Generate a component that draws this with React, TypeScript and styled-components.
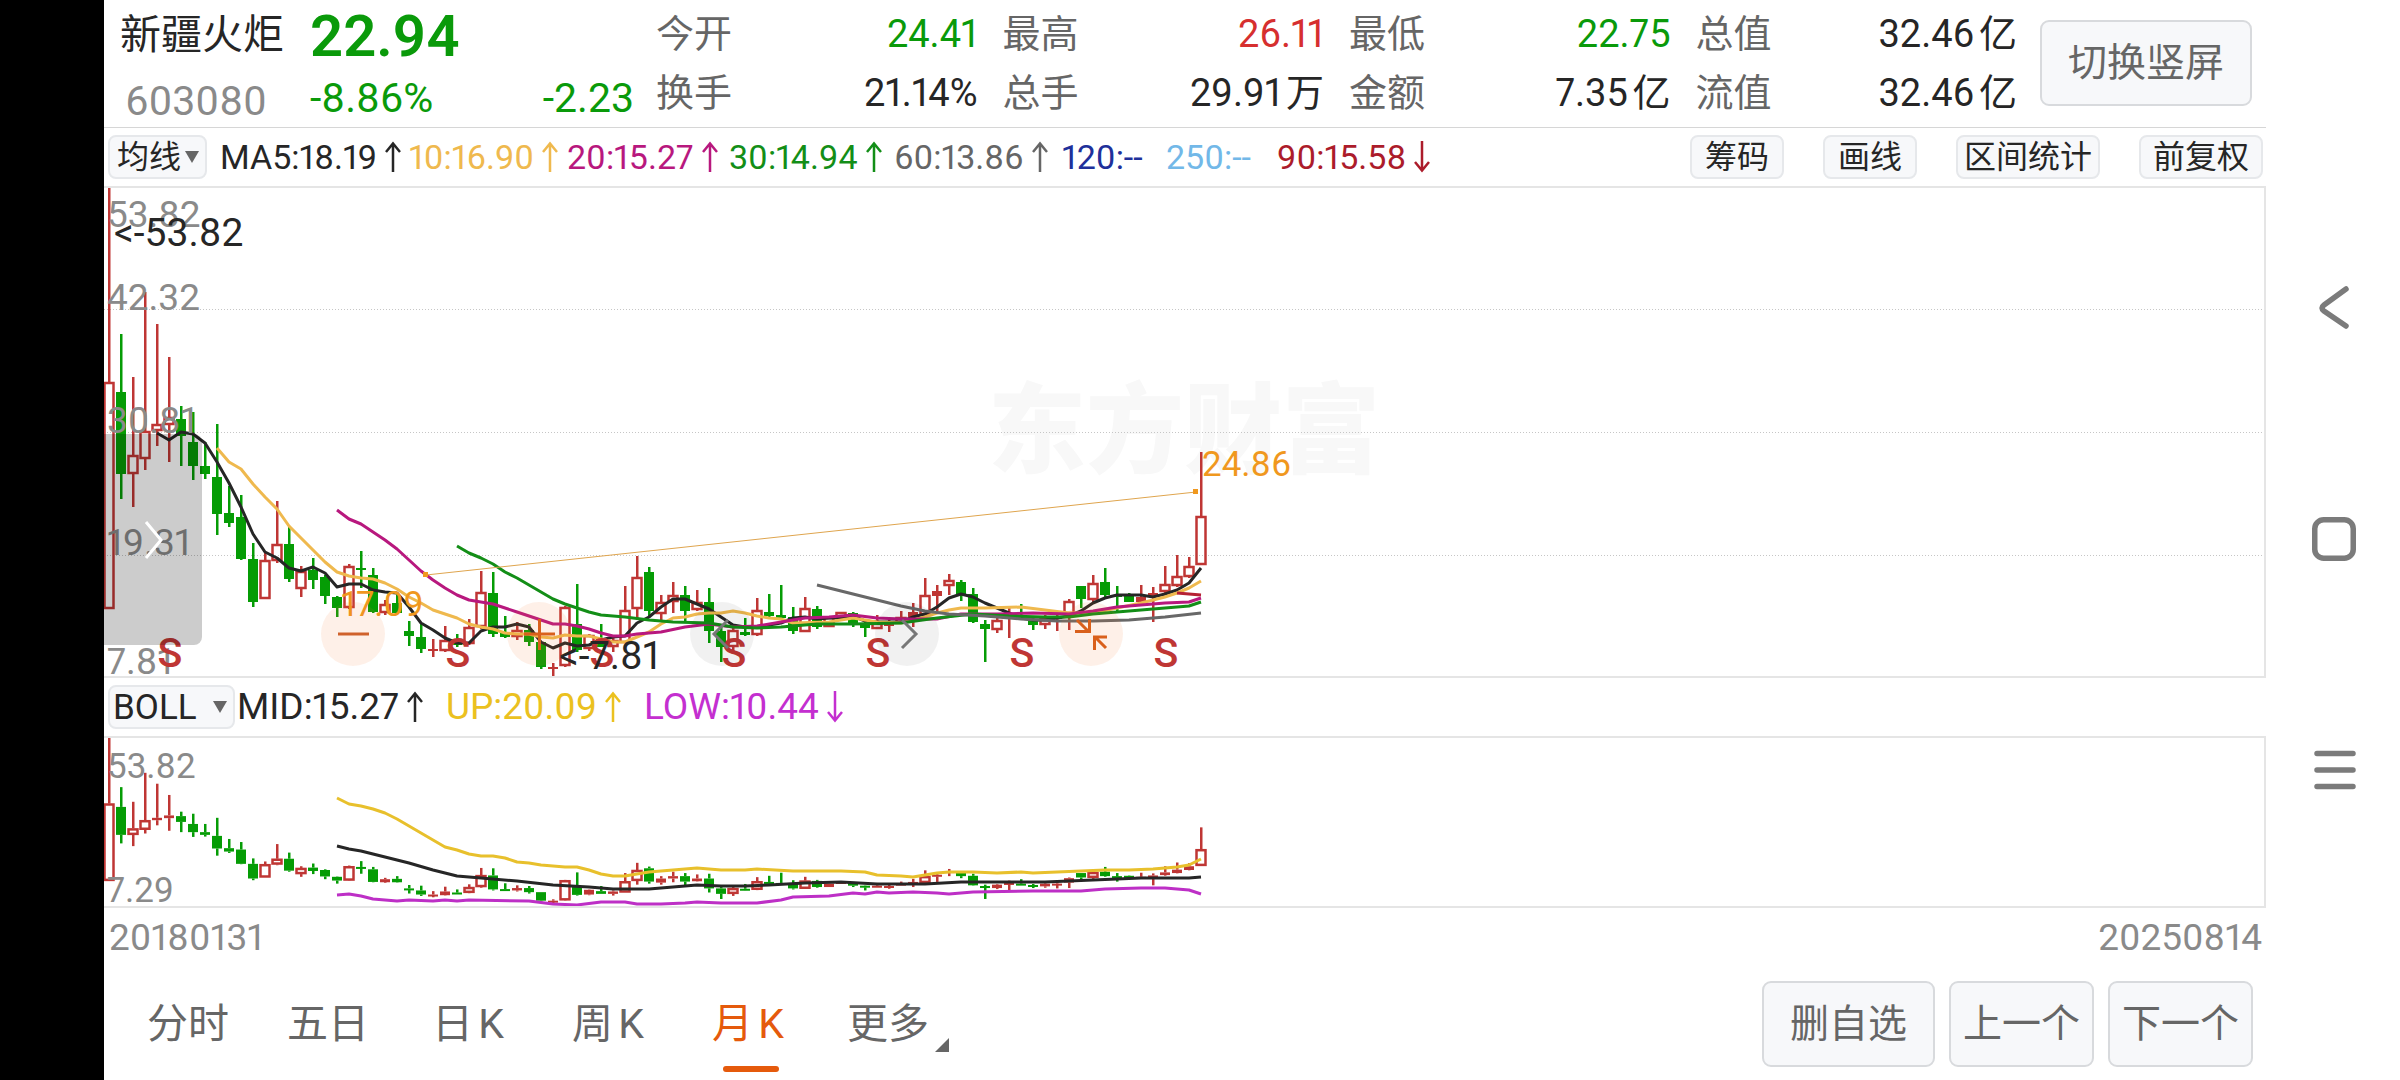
import React from "react";
import styled, { createGlobalStyle } from "styled-components";

const GlobalStyle = createGlobalStyle`
  *, *::before, *::after { box-sizing: border-box; }
  body { margin: 0; background: #fff; }
  button, select { font-family: inherit; }
`;

const GREEN = "#0a9a0a";
const RED = "#bf3634";
const INK = "#262626";
const MUTED = "#666";
const ORANGE = "#f0981e";

/* ---------- data ---------- */

// [high, body top, body bottom, low, rising]; distance in px below the top price of the main pane
type Candle = [number, number, number, number, 0 | 1];

const candles: Candle[] = [
  [0, 195, 422, 422, 1], [147, 205, 287, 312, 0], [190, 268, 287, 320, 1], [105, 244, 272, 283, 1],
  [137, 237, 244, 259, 1], [170, 230, 238, 275, 1], [219, 232, 249, 279, 0], [225, 255, 279, 293, 0],
  [255, 279, 287, 292, 0], [237, 290, 327, 348, 0], [299, 326, 336, 340, 0], [308, 330, 372, 373, 0],
  [356, 372, 415, 420, 0], [365, 373, 412, 412, 1], [314, 357, 374, 376, 1], [339, 357, 392, 395, 0],
  [379, 384, 402, 410, 1], [371, 383, 393, 402, 0], [388, 390, 409, 417, 0], [409, 410, 421, 430, 0],
  [377, 379, 421, 422, 1], [364, 381, 383, 401, 0], [381, 388, 425, 426, 0], [413, 417, 426, 428, 1],
  [408, 416, 426, 427, 0], [434, 444, 449, 459, 0], [436, 450, 462, 466, 0], [452, 462, 464, 470, 1],
  [439, 453, 464, 465, 1], [447, 456, 457, 460, 0], [432, 440, 457, 458, 1], [384, 405, 440, 442, 1],
  [385, 406, 447, 450, 0], [429, 446, 450, 451, 0], [435, 443, 450, 453, 1], [437, 443, 455, 459, 0],
  [455, 455, 480, 482, 0], [476, 480, 481, 490, 1], [419, 420, 479, 480, 1], [397, 437, 463, 465, 0],
  [447, 448, 462, 464, 1], [437, 452, 460, 460, 0], [450, 453, 460, 465, 1], [399, 423, 456, 456, 1],
  [369, 390, 422, 433, 1], [380, 385, 424, 430, 0], [408, 415, 427, 433, 1], [395, 408, 415, 426, 1],
  [399, 408, 424, 434, 0], [403, 415, 423, 424, 1], [401, 415, 444, 456, 0], [440, 444, 460, 475, 0],
  [440, 443, 460, 466, 1], [431, 445, 448, 449, 0], [411, 423, 448, 449, 1], [407, 425, 429, 430, 0],
  [398, 428, 431, 432, 0], [420, 430, 444, 447, 0], [410, 421, 445, 445, 1], [419, 422, 440, 442, 0],
  [430, 430, 440, 440, 1], [425, 425, 431, 431, 1], [425, 426, 436, 440, 0], [435, 436, 441, 450, 0],
  [428, 436, 442, 442, 1], [431, 437, 438, 445, 1], [424, 430, 436, 436, 1], [416, 425, 430, 440, 1],
  [391, 408, 428, 428, 1], [398, 404, 409, 425, 1], [387, 393, 399, 408, 1], [393, 395, 408, 414, 0],
  [401, 407, 435, 436, 0], [433, 437, 442, 475, 0], [431, 433, 443, 446, 1], [421, 428, 430, 451, 1],
  [417, 430, 431, 432, 0], [431, 434, 438, 443, 0], [428, 430, 438, 442, 1], [426, 430, 431, 444, 1],
  [412, 414, 427, 443, 1], [399, 399, 412, 421, 0], [388, 396, 413, 416, 1], [381, 395, 408, 410, 0],
  [399, 408, 409, 424, 0], [406, 407, 415, 415, 0], [398, 410, 415, 415, 1], [400, 406, 410, 435, 1],
  [379, 397, 405, 407, 1], [368, 389, 399, 400, 1], [370, 379, 390, 391, 1], [265, 329, 378, 378, 1],
];

// [candle index, y]
type Point = [number, number];
interface Series { color: string; points: Point[]; }

const from = (start: number, ys: number[]): Point[] => ys.map((y, k) => [start + k, y]);

const mainSeries: Series[] = [
  {
    color: INK,
    points: from(4, [
      246, 253, 245, 247, 256, 275, 296, 320, 347, 365, 371, 381, 384, 380, 386, 400, 397, 397, 403, 405, 406,
      420, 436, 443, 451, 456, 456, 444, 440, 440, 437, 440, 455, 461, 456, 459, 458, 453, 450, 449, 436, 430,
      420, 412, 412, 417, 422, 430, 438, 440, 440, 438, 436, 431, 430, 432, 431, 431, 429, 434, 435, 435, 435,
      430, 427, 420, 411, 407, 410, 416, 421, 426, 431, 433, 433, 431, 429, 424, 416, 411, 408, 408, 408, 410,
      407, 403, 396, 381,
    ]),
  },
  {
    color: "#efb94e",
    points: [
      ...from(9, [
        261, 275, 282, 297, 310, 322, 339, 351, 363, 375, 385, 389, 391, 392, 396, 402, 410, 416, 423, 427, 431,
        437, 440, 442, 446, 447, 447, 450, 451, 448, 449, 449, 452, 455, 455, 450, 445, 437, 431, 430, 427, 426,
        426, 424, 426, 429, 431, 432, 436,
      ]),
      [60, 435], [62, 431], [64, 435], [66, 436], [67, 433], [68, 430], [69, 426], [70, 423], [71, 421], [73, 421],
      [76, 420], [78, 423], [80, 426], [82, 426], [84, 421], [86, 416], [88, 410], [89, 406], [90, 401], [91, 394],
    ],
  },
  {
    color: "#b8187e",
    points: [
      ...from(19, [
        323, 332, 337, 345, 353, 362, 373, 384, 393, 401, 408, 413, 415, 417, 421, 425, 429, 433, 437, 437, 439,
        442, 446, 449, 449, 447,
      ]),
      [46, 445], [48, 440], [50, 437], [52, 440], [54, 439], [56, 435], [58, 431], [60, 430], [62, 428], [64, 431],
      [66, 432], [69, 432], [71, 427], [74, 427], [77, 426], [80, 427], [82, 424], [84, 420], [86, 418], [88, 416],
      [90, 415], [91, 411],
    ],
  },
  {
    color: "#138e17",
    points: [
      ...from(29, [359, 366, 371, 377, 385, 391, 398, 405, 412, 417, 421, 425, 428]),
      [43, 430], [45, 433], [47, 435], [50, 436], [52, 440], [54, 441], [56, 440], [59, 437], [62, 437], [66, 436],
      [69, 431], [72, 427], [75, 429], [78, 430], [80, 430], [82, 427], [84, 425], [86, 423], [88, 421], [90, 419],
      [91, 415],
    ],
  },
  {
    color: "#686868",
    points: [
      [59, 398], [60, 401], [62, 407], [64, 413], [66, 419], [68, 424], [70, 427], [73, 429], [76, 432], [79, 434],
      [82, 434], [85, 433], [88, 430], [91, 426],
    ],
  },
  { color: "#b52133", points: [[89, 406], [90, 407], [91, 408]] },
];

const bollSeries: Series[] = [
  {
    color: "#e8c02c",
    points: [
      ...from(19, [61, 67, 69, 72, 76, 82, 89, 96, 103, 110, 113, 117, 119, 119, 121, 125, 126, 128]),
      [38, 130], [39, 130], [40, 133], [41, 137], [42, 139], [43, 139], [44, 137], [45, 135], [47, 133], [49, 131],
      [51, 133], [53, 133], [54, 132], [57, 134], [61, 134], [63, 135], [64, 138], [66, 139], [67, 140], [69, 136],
      [70, 135], [72, 135], [74, 136], [76, 135], [77, 136], [79, 135], [81, 134], [83, 133], [85, 133], [87, 132],
      [89, 130], [90, 128], [91, 122],
    ],
  },
  {
    color: INK,
    points: [
      [19, 109], [20, 112], [21, 114], [23, 120], [25, 126], [27, 133], [29, 139], [31, 141], [34, 144], [37, 148],
      [40, 150], [42, 152], [45, 152], [47, 150], [49, 148], [51, 149], [53, 149], [55, 148], [58, 146], [61, 145],
      [64, 147], [68, 147], [71, 145], [78, 145], [82, 143], [86, 141], [90, 141], [91, 140],
    ],
  },
  {
    color: "#bd2fc6",
    points: [
      [19, 158], [20, 157], [21, 159], [22, 162], [24, 164], [25, 163], [27, 164], [28, 163], [29, 164], [30, 163],
      [35, 164], [37, 167], [39, 168], [41, 165], [43, 165], [44, 167], [46, 167], [48, 166], [49, 165], [51, 166],
      [54, 166], [56, 163], [57, 160], [60, 159], [62, 156], [63, 157], [64, 155], [65, 156], [67, 155], [69, 156],
      [70, 157], [72, 155], [77, 154], [81, 154], [83, 152], [86, 151], [88, 151], [90, 153], [91, 157],
    ],
  },
];

const stats = [
  { label: "今开", value: "24.41", color: GREEN },
  { label: "最高", value: "26.11", color: "#d62f2f" },
  { label: "最低", value: "22.75", color: GREEN },
  { label: "总值", value: "32.46亿", color: INK },
  { label: "换手", value: "21.14%", color: INK },
  { label: "总手", value: "29.91万", color: INK },
  { label: "金额", value: "7.35亿", color: INK },
  { label: "流值", value: "32.46亿", color: INK },
];

const averages = [
  { text: "MA5:18.19", arrow: "up", color: INK, width: 189 },
  { text: "10:16.90", arrow: "up", color: "#efb94e", width: 158 },
  { text: "20:15.27", arrow: "up", color: "#b8187e", width: 162 },
  { text: "30:14.94", arrow: "up", color: "#138e17", width: 165 },
  { text: "60:13.86", arrow: "up", color: MUTED, width: 168 },
  { text: "120:--", arrow: "", color: "#20309a", width: 104 },
  { text: "250:--", arrow: "", color: "#72b8e8", width: 111 },
  { text: "90:15.58", arrow: "down", color: "#ac1c2b", width: 160 },
];

const bands = [
  { text: "MID:15.27", arrow: "up", color: INK, width: 209 },
  { text: "UP:20.09", arrow: "up", color: "#ebc11f", width: 198 },
  { text: "LOW:10.44", arrow: "down", color: "#c42fd0", width: 210 },
];

/* ---------- layout ---------- */

const Screen = styled.div`
  display: flex;
  min-height: 100vh;
  background: #fff;
  color: ${INK};
  font-family: Roboto, "Noto Sans CJK SC", sans-serif;
  font-variant-numeric: proportional-nums;
  text-autospace: normal;
`;

const Cutout = styled.div`
  flex: 0 0 104px;
  background: #000;
`;

const Main = styled.main`
  flex: 1;
  min-width: 0;
  display: flex;
  flex-direction: column;
`;

const Header = styled.header`
  display: flex;
  height: 128px;
  padding-right: 14px;
  border-bottom: 1px solid #d6d6d6;
`;

const Identity = styled.div`
  flex: 0 0 206px;
  padding-left: 16px;
`;

const StockName = styled.h1`
  margin: 0;
  font-size: 41px;
  line-height: 70px;
  font-weight: 400;
`;

const StockCode = styled.div`
  padding-left: 5px;
  font-size: 41px;
  line-height: 62px;
  color: #8a8a8a;
`;

const Quote = styled.div`
  flex: 0 0 324px;
  color: ${GREEN};
`;

const LastPrice = styled.div`
  font-size: 58px;
  line-height: 72px;
  font-weight: 600;
`;

const Change = styled.div`
  display: flex;
  justify-content: space-between;
  font-size: 41px;
  line-height: 52px;
`;

const Stats = styled.dl`
  flex: 1;
  margin: 0;
  padding: 5px 23px 0 22px;
  display: grid;
  grid-template-columns: repeat(4, 1fr);
  grid-auto-rows: 59px;
  column-gap: 25px;
`;

const Stat = styled.div`
  display: flex;
  justify-content: space-between;
  font-size: 38px;
  line-height: 59px;
`;

const StatLabel = styled.dt`
  color: ${MUTED};
`;

const StatValue = styled.dd<{ $color: string }>`
  margin: 0;
  color: ${(p) => p.$color};
`;

const Button = styled.button<{ $width: number }>`
  width: ${(p) => p.$width}px;
  height: 86px;
  padding: 0;
  border: 2px solid #d8dadd;
  border-radius: 9px;
  background: #f7f8fa;
  color: ${MUTED};
  font-size: 39px;
  line-height: 56px;
`;

const HeaderButton = styled(Button)`
  margin-top: 20px;
`;

const Toolbar = styled.div`
  display: flex;
  align-items: center;
  height: 58px;
  padding: 0 3px 0 4px;
`;

const SelectBox = styled.label<{ $width: number }>`
  position: relative;
  width: ${(p) => p.$width}px;
  flex: none;

  svg {
    position: absolute;
    right: 8px;
    top: 15px;
    pointer-events: none;
  }
`;

const Select = styled.select<{ $size: number; $pad: number }>`
  appearance: none;
  display: block;
  width: 100%;
  height: 44px;
  padding: 0 0 0 ${(p) => p.$pad}px;
  border: 2px solid #e6e8eb;
  border-radius: 8px;
  background: #f7f8fa;
  color: ${INK};
  font-size: ${(p) => p.$size}px;
`;

const Indicators = styled.div<{ $size: number; $inset: number }>`
  display: flex;
  flex: 1;
  padding-left: ${(p) => p.$inset}px;
  font-size: ${(p) => p.$size}px;
  line-height: 44px;
`;

const Indicator = styled.span<{ $color: string; $width: number }>`
  display: flex;
  align-items: center;
  flex: 0 0 ${(p) => p.$width}px;
  gap: 7px;
  white-space: nowrap;
  color: ${(p) => p.$color};
`;

const Tools = styled.div`
  display: flex;
  gap: 39px;
`;

const ToolButton = styled.button<{ $pad: number }>`
  height: 44px;
  padding: 0 ${(p) => p.$pad}px;
  border: 2px solid #e6e8eb;
  border-radius: 8px;
  background: #f7f8fa;
  color: ${INK};
  font-size: 32px;
  line-height: 40px;
  white-space: nowrap;
`;

const Pane = styled.section<{ $height: number }>`
  position: relative;
  height: ${(p) => p.$height}px;
  border: solid #e5e5e5;
  border-width: 2px 2px 2px 0;
  overflow: hidden;
`;

const Watermark = styled.div`
  position: absolute;
  inset: 0;
  display: flex;
  align-items: center;
  justify-content: center;
  color: #f8f8f8;
  font-size: 98px;
  line-height: 98px;
  font-weight: 900;
`;

const Chart = styled.svg`
  position: relative;
  display: block;
  width: 100%;
  height: 100%;
  font-size: 37px;
`;

const Drawer = styled.button`
  position: absolute;
  left: 0;
  top: 246px;
  width: 98px;
  height: 211px;
  padding: 0;
  border: 0;
  border-radius: 0 8px 8px 0;
  background: rgba(0, 0, 0, 0.2);
`;

const RoundButton = styled.button<{ $x: number; $tone: string }>`
  position: absolute;
  left: ${(p) => p.$x}px;
  top: 414px;
  width: 64px;
  height: 64px;
  padding: 0;
  border: 0;
  border-radius: 50%;
  background: ${(p) => p.$tone};

  svg {
    display: block;
  }
`;

const Dates = styled.div`
  display: flex;
  justify-content: space-between;
  padding: 0 4px 0 5px;
  font-size: 37px;
  line-height: 60px;
  color: #8a8a8a;
`;

const Footer = styled.footer`
  flex: 1;
  display: flex;
  justify-content: space-between;
  padding: 13px 13px 0 14px;
`;

const Tabs = styled.nav`
  display: flex;
`;

const Tab = styled.button<{ $active?: boolean }>`
  position: relative;
  width: 140px;
  height: 91px;
  padding: 0 0 5px;
  border: 0;
  background: none;
  color: ${(p) => (p.$active ? "#e55a0c" : MUTED)};
  font-size: 41px;
  line-height: 86px;

  &::after {
    content: "";
    display: ${(p) => (p.$active ? "block" : "none")};
    position: absolute;
    left: 45px;
    bottom: 0;
    width: 56px;
    height: 6px;
    border-radius: 3px;
    background: #e55a0c;
  }

  svg {
    position: absolute;
    right: 9px;
    bottom: 20px;
  }
`;

const Actions = styled.div`
  display: flex;
  gap: 14px;
`;

const SystemNav = styled.nav`
  flex: 0 0 134px;
  display: flex;
  flex-direction: column;
  align-items: center;
  justify-content: center;
  gap: 183px;
`;

const NavButton = styled.button`
  width: 48px;
  height: 48px;
  padding: 0;
  border: 0;
  background: none;

  svg {
    display: block;
  }
`;

/* ---------- parts ---------- */

const Arrow = ({ dir }: { dir: string }) => (
  <svg width="18" height="34" viewBox="0 0 18 34" fill="none" stroke="currentColor" strokeWidth="2.500">
    <path d={dir === "up" ? "M9 32V4M2 12L9 3.500L16 12" : "M9 1V30M2 22L9 30.500L16 22"} />
  </svg>
);

const Caret = () => (
  <svg width="14" height="14" viewBox="0 0 14 14" fill={MUTED} aria-hidden="true">
    <path d="M0 1H14L7 13Z" />
  </svg>
);

const stepX = (i: number) => 5 + i * 12;

function Candles({ scale }: { scale: number }) {
  return (
    <g>
      {candles.map(([high, top, bottom, low, rising], i) => {
        const x = stepX(i);
        const t = top * scale;
        const b = bottom * scale;
        const h = high * scale;
        const l = low * scale;
        const color = rising ? RED : "#059c05";
        const size = Math.max(b - t, 2);
        const hollow = rising && size > 5;
        return (
          <g key={i} fill={color}>
            {t > h && <rect x={x - 1} y={h} width="2.500" height={t - h} />}
            {l > b && <rect x={x - 1} y={b} width="2.500" height={l - b} />}
            {hollow ? (
              <rect x={x - 4.5} y={t + 1} width="9" height={size - 2} fill="none" stroke={color} strokeWidth="2.500" />
            ) : (
              <rect x={x - 5} y={t} width="10" height={size} />
            )}
          </g>
        );
      })}
    </g>
  );
}

const Lines = ({ series }: { series: Series[] }) => (
  <g fill="none" strokeWidth="3" strokeLinejoin="round">
    {series.map((s, k) => (
      <polyline key={k} stroke={s.color} points={s.points.map(([i, y]) => `${stepX(i)},${y}`).join(" ")} />
    ))}
  </g>
);

const PriceChart = () => (
  <Chart role="img" aria-label="月K">
    <g transform="translate(0,-1)">
      {[122, 245, 368].map((y) => (
        <line key={y} x1="0" x2="100%" y1={y + 0.5} y2={y + 0.5} stroke="#c6c6c6" strokeDasharray="1 2" />
      ))}
      <Candles scale={1} />
      <Lines series={mainSeries} />
      <line x1="322" y1="388" x2="1092" y2="305" stroke="#dfa54e" />
      <rect x="319" y="385" width="5" height="5" fill={ORANGE} />
      <rect x="1089" y="302" width="5" height="5" fill={ORANGE} />
      <g fill="#8a8a8a">
        <text x="3" y="40">53.82</text>
        <text x="3" y="123">42.32</text>
        <text x="3" y="246">30.81</text>
        <text x="3" y="368">19.31</text>
        <text x="3" y="487">7.81</text>
      </g>
      <g fill={RED} fontSize="41" fontWeight="500" textAnchor="middle">
        {[66, 354, 498, 630, 774, 918, 1062].map((x) => (
          <text key={x} x={x} y="480">S</text>
        ))}
      </g>
      <g fill={INK} fontSize="39">
        <text x="10" y="59">&lt;-53.82</text>
        <text x="455" y="482">&lt;-7.81</text>
      </g>
      <g fill={ORANGE} fontSize="35">
        <text x="237" y="429">17.09</text>
        <text x="1098" y="289">24.86</text>
      </g>
    </g>
  </Chart>
);

const BollChart = () => (
  <Chart role="img" aria-label="BOLL">
    <g transform="translate(0,-1)">
      <Candles scale={0.341} />
      <Lines series={bollSeries} />
      <g fill="#8a8a8a" fontSize="35">
        <text x="3" y="41">53.82</text>
        <text x="3" y="165">7.29</text>
      </g>
    </g>
  </Chart>
);

interface Shape { name: string; x: number; tone: string; color: string; d: string; }

const WARM = "rgba(245, 120, 50, 0.11)";
const COOL = "rgba(0, 0, 0, 0.055)";

const chartButtons: Shape[] = [
  { name: "缩小", x: 217, tone: WARM, color: "#d0622c", d: "M17 32H48" },
  { name: "放大", x: 403, tone: WARM, color: "#d9601c", d: "M17 32H48M32.500 17V48" },
  { name: "左移", x: 586, tone: COOL, color: "#777", d: "M38 18L24 32L38 46" },
  { name: "右移", x: 771, tone: COOL, color: "#777", d: "M27 18L41 32L27 46" },
  {
    name: "收起", x: 955, tone: WARM, color: "#d9601c",
    d: "M18 18L29 29M16 29.500H30.500V17M47 46L36 35M35.500 48V35H48",
  },
];

export default function App() {
  return (
    <Screen>
      <GlobalStyle />
      <Cutout />
      <Main>
        <Header>
          <Identity>
            <StockName>新疆火炬</StockName>
            <StockCode>603080</StockCode>
          </Identity>
          <Quote>
            <LastPrice>22.94</LastPrice>
            <Change>
              <span>-8.86%</span>
              <span>-2.23</span>
            </Change>
          </Quote>
          <Stats>
            {stats.map((s) => (
              <Stat key={s.label}>
                <StatLabel>{s.label}</StatLabel>
                <StatValue $color={s.color}>{s.value}</StatValue>
              </Stat>
            ))}
          </Stats>
          <HeaderButton $width={212}>切换竖屏</HeaderButton>
        </Header>

        <Toolbar>
          <SelectBox $width={99}>
            <Select $size={32} $pad={7} aria-label="主图指标">
              <option>均线</option>
            </Select>
            <Caret />
          </SelectBox>
          <Indicators $size={34} $inset={13}>
            {averages.map((a) => (
              <Indicator key={a.text} $color={a.color} $width={a.width}>
                {a.text}
                {a.arrow && <Arrow dir={a.arrow} />}
              </Indicator>
            ))}
          </Indicators>
          <Tools>
            <ToolButton $pad={13}>筹码</ToolButton>
            <ToolButton $pad={13}>画线</ToolButton>
            <ToolButton $pad={6}>区间统计</ToolButton>
            <ToolButton $pad={12}>前复权</ToolButton>
          </Tools>
        </Toolbar>

        <Pane $height={492}>
          <Watermark>东方财富</Watermark>
          <PriceChart />
          <Drawer aria-label="展开">
            <svg width="98" height="211" viewBox="0 0 98 211" fill="none" stroke="#fff" strokeWidth="3">
              <path d="M42 88L57 106L42 124" />
            </svg>
          </Drawer>
          {chartButtons.map((b) => (
            <RoundButton key={b.name} $x={b.x} $tone={b.tone} aria-label={b.name}>
              <svg width="64" height="64" viewBox="0 0 64 64" fill="none" stroke={b.color} strokeWidth="3">
                <path d={b.d} />
              </svg>
            </RoundButton>
          ))}
        </Pane>

        <Toolbar>
          <SelectBox $width={127}>
            <Select $size={35} $pad={3} aria-label="副图指标">
              <option>BOLL</option>
            </Select>
            <Caret />
          </SelectBox>
          <Indicators $size={37} $inset={2}>
            {bands.map((b) => (
              <Indicator key={b.text} $color={b.color} $width={b.width}>
                {b.text}
                <Arrow dir={b.arrow} />
              </Indicator>
            ))}
          </Indicators>
        </Toolbar>

        <Pane $height={172}>
          <BollChart />
        </Pane>

        <Dates>
          <time>20180131</time>
          <time>20250814</time>
        </Dates>

        <Footer>
          <Tabs>
            <Tab>分时</Tab>
            <Tab>五日</Tab>
            <Tab>日K</Tab>
            <Tab>周K</Tab>
            <Tab $active>月K</Tab>
            <Tab>
              更多
              <svg width="14" height="14" viewBox="0 0 14 14" fill={MUTED}>
                <path d="M14 0V14H0Z" />
              </svg>
            </Tab>
          </Tabs>
          <Actions>
            <Button $width={173}>删自选</Button>
            <Button $width={145}>上一个</Button>
            <Button $width={145}>下一个</Button>
          </Actions>
        </Footer>
      </Main>

      <SystemNav>
        <NavButton aria-label="返回">
          <svg width="48" height="48" viewBox="0 0 48 48" fill="none" stroke="#7b7b7b" strokeWidth="5.500" strokeLinecap="round">
            <path d="M37 4L15 20Q11 23 15 26L37 41" />
          </svg>
        </NavButton>
        <NavButton aria-label="主页">
          <svg width="48" height="48" viewBox="0 0 48 48" fill="none" stroke="#7b7b7b" strokeWidth="5.500">
            <rect x="5.750" y="3.750" width="38.500" height="38.500" rx="9" />
          </svg>
        </NavButton>
        <NavButton aria-label="最近任务">
          <svg width="48" height="48" viewBox="0 0 48 48" fill="none" stroke="#7b7b7b" strokeWidth="5.500" strokeLinecap="round">
            <path d="M8 6.500H44M8 23H44M8 39.500H44" />
          </svg>
        </NavButton>
      </SystemNav>
    </Screen>
  );
}
